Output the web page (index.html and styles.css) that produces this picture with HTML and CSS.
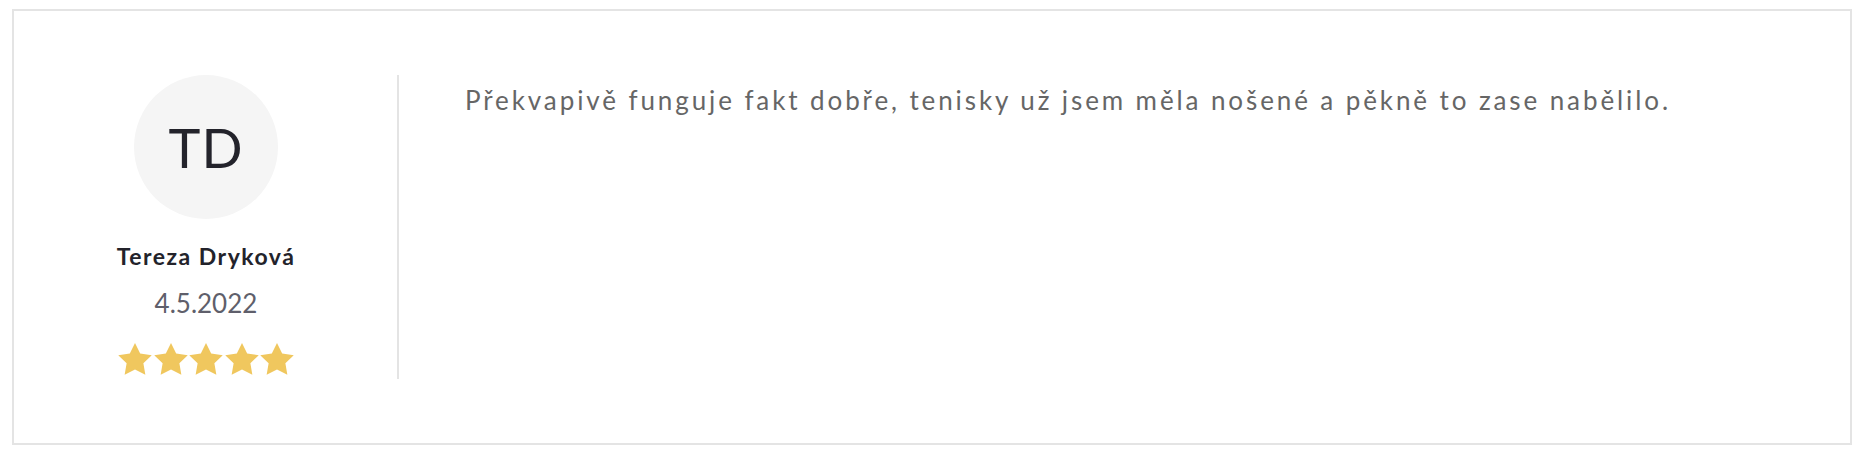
FILE: index.html
```html
<!DOCTYPE html>
<html lang="cs">
<head>
    <meta charset="UTF-8">
    <meta name="viewport" content="width=device-width, initial-scale=1.0">
    <title>Recenze</title>
    <link rel="stylesheet" href="styles.css">
</head>
<body>
    <div class="page">
        <div class="review">
            <div class="author">
                <div class="avatar">TD</div>
                <div class="name">Tereza Dryková</div>
                <div class="date">4.5.2022</div>
                <div class="stars">
                    <svg viewBox="2 2 20 19.1"><path d="M12 2l3.09 6.26L22 9.27l-5 4.87 1.18 6.88L12 17.77l-6.18 3.25L7 14.14 2 9.27l6.91-1.01L12 2z"/></svg>
                    <svg viewBox="2 2 20 19.1"><path d="M12 2l3.09 6.26L22 9.27l-5 4.87 1.18 6.88L12 17.77l-6.18 3.25L7 14.14 2 9.27l6.91-1.01L12 2z"/></svg>
                    <svg viewBox="2 2 20 19.1"><path d="M12 2l3.09 6.26L22 9.27l-5 4.87 1.18 6.88L12 17.77l-6.18 3.25L7 14.14 2 9.27l6.91-1.01L12 2z"/></svg>
                    <svg viewBox="2 2 20 19.1"><path d="M12 2l3.09 6.26L22 9.27l-5 4.87 1.18 6.88L12 17.77l-6.18 3.25L7 14.14 2 9.27l6.91-1.01L12 2z"/></svg>
                    <svg viewBox="2 2 20 19.1"><path d="M12 2l3.09 6.26L22 9.27l-5 4.87 1.18 6.88L12 17.77l-6.18 3.25L7 14.14 2 9.27l6.91-1.01L12 2z"/></svg>
                </div>
            </div>
            <div class="divider"></div>
            <p class="text">Překvapivě funguje fakt dobře, tenisky už jsem měla nošené a pěkně to zase nabělilo.</p>
        </div>
    </div>
</body>
</html>
```

FILE: styles.css
```css
body {
    margin: 0;
    background: #fff;
    font-family: Lato, "Noto Sans", sans-serif;
}
.page {
    padding: 9px 12px;
}
.review {
    display: flex;
    align-items: flex-start;
    border: 2px solid #e4e4e4;
    padding: 64px;
    min-height: 304px;
}
.author {
    width: 256px;
    display: flex;
    flex-direction: column;
    align-items: center;
    margin-right: 63px;
}
.avatar {
    width: 144px;
    height: 144px;
    border-radius: 50%;
    background: #f5f5f5;
    color: #23232b;
    font-size: 54px;
    letter-spacing: 1px;
    display: flex;
    align-items: center;
    justify-content: center;
}
.name {
    margin-top: 23px;
    font-size: 23px;
    line-height: 28px;
    font-weight: 700;
    letter-spacing: 1.5px;
    color: #23232b;
}
.date {
    margin-top: 17px;
    font-size: 26px;
    line-height: 32px;
    color: #5f5f6b;
}
.stars {
    margin-top: 24px;
    display: flex;
    gap: 1.5px;
}
.stars svg {
    width: 34px;
    height: 32px;
    fill: #f0c75e;
}
.divider {
    width: 2px;
    align-self: stretch;
    background: #e4e4e4;
}
.text {
    margin: 10px 0 0 66px;
    font-size: 26px;
    line-height: 30px;
    letter-spacing: 2.9px;
    color: #666;
}
```
